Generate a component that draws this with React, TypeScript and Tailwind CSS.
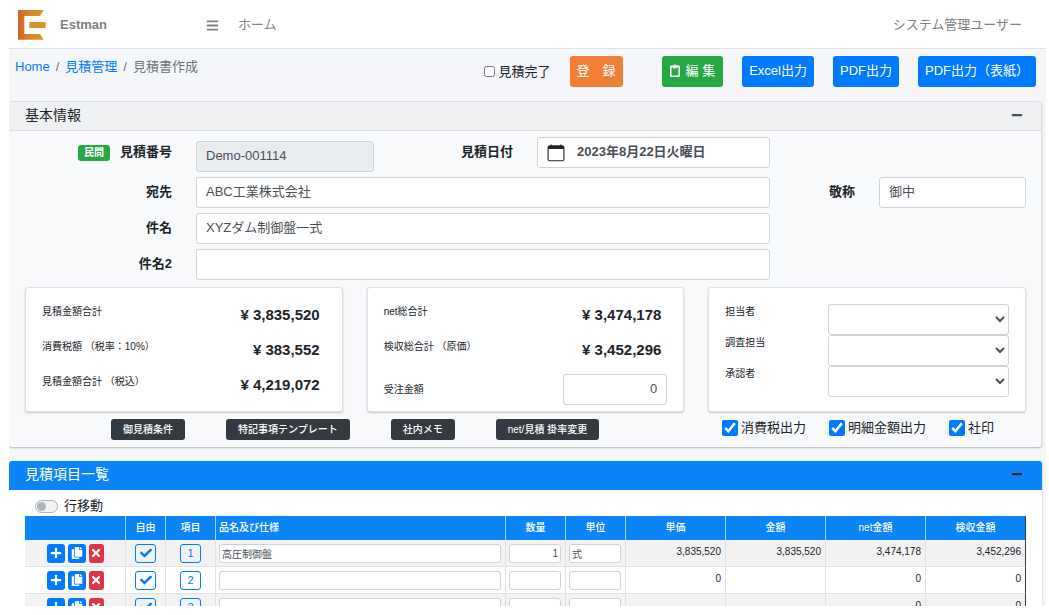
import { useState } from "react";
import type { ReactNode } from "react";
import { FaBars, FaCheck, FaCopy, FaMinus, FaPlus, FaTimes } from "react-icons/fa";

type Row = {
  name: string;
  quantity: string;
  unit: string;
  price: string;
  amount: string;
  net: string;
  cost: string;
};

const emptyRow: Row = { name: "", quantity: "", unit: "", price: "0", amount: "", net: "0", cost: "0" };

const rows: Row[] = [
  {
    name: "高圧制御盤",
    quantity: "1",
    unit: "式",
    price: "3,835,520",
    amount: "3,835,520",
    net: "3,474,178",
    cost: "3,452,296",
  },
  emptyRow,
  { ...emptyRow, price: "" },
];

const fieldClass =
  "block h-[31px] w-full min-w-0 rounded-[3px] border border-[#ced4da] bg-white px-[9px] pb-1 text-[13px] text-[#495057]";
const cellInputClass =
  "block h-[19px] w-full min-w-0 rounded-[3px] border border-[#ced4da] bg-white px-0.5 text-[10px] text-[#495057]";
const labelClass = "text-right text-[13px] leading-5 font-bold text-[#212529]";
const primaryClass = "h-[31px] rounded-[3px] bg-[#007bff] px-[7px] pb-0.5 text-[13px] whitespace-nowrap text-white";
const darkClass = "h-[21px] rounded-[3px] bg-[#343a40] px-3 text-[10px] font-medium whitespace-nowrap text-white";
const panelClass = "rounded-[3px] border border-[#dfe1e4] bg-white px-4 pt-4 shadow-[0_1px_2px_rgba(0,0,0,0.2)]";

function Logo() {
  return (
    <svg viewBox="0 0 84 90" className="h-[30px] w-7" aria-hidden>
      <defs>
        <linearGradient id="logo-fill" x1="0" x2="1" y1="0" y2="0">
          <stop offset="0" stopColor="#cc6228" />
          <stop offset="0.4" stopColor="#d98228" />
          <stop offset="1" stopColor="#dd952b" />
        </linearGradient>
      </defs>
      <path d="M0 0H77L66 18H19V72H66L77 89H0Z" fill="url(#logo-fill)" />
      <path d="M34 36H83V54H34Z" fill="#db922a" />
    </svg>
  );
}

function ClipboardIcon() {
  return (
    <svg viewBox="0 0 10 13" className="h-[13px] w-2.5" aria-hidden>
      <rect x="0.8" y="2.3" width="8.4" height="9.9" rx="0.5" fill="none" stroke="currentColor" strokeWidth="1.6" />
      <path d="M2.6 4.2V1.5H3.8A1.25 1.25 0 0 1 6.2 1.5H7.4V4.2Z" fill="currentColor" />
    </svg>
  );
}

function CalendarIcon() {
  return (
    <svg viewBox="0 0 18 18" className="h-[18px] w-[18px] shrink-0 text-[#212529]" aria-hidden>
      <rect x="1.1" y="2" width="15.8" height="14.8" rx="1.6" fill="none" stroke="currentColor" strokeWidth="1.1" />
      <path d="M1 5V3Q1 1.5 2.6 1.5H3.6V0.5H4.8V1.5H13.2V0.5H14.4V1.5H15.4Q17 1.5 17 3V5Z" fill="currentColor" />
    </svg>
  );
}

function AmountRow({ label, value }: { label: string; value: string }) {
  return (
    <div className="flex h-[35px] items-start justify-between pr-1.5">
      <span className="text-[10px] leading-4">{label}</span>
      <span className="text-[15px] leading-[21px] font-bold">¥ {value}</span>
    </div>
  );
}

function CheckOption({ children }: { children: ReactNode }) {
  return (
    <label className="flex items-center gap-[3px] text-[13px] leading-[18px] whitespace-nowrap">
      <input type="checkbox" defaultChecked className="h-4 w-4 accent-[#007bff]" />
      {children}
    </label>
  );
}

function BasicInfo() {
  const [open, setOpen] = useState(true);

  return (
    <section className="mr-1 rounded-[3px] border-t border-r border-[#dcdee1] bg-[#f8f9fb] shadow-[0_1px_2px_rgba(0,0,0,0.25)]">
      <header className="flex h-[29px] items-center justify-between border-b border-[#dcdee1] bg-[#eff0f2] pr-[18px] pb-0.5 pl-4">
        <h2 className="text-[14px] leading-5">基本情報</h2>
        <button type="button" aria-label="折りたたむ" onClick={() => setOpen(!open)}>
          <FaMinus className="h-3 w-3 text-[#495057]" />
        </button>
      </header>
      {open && (
        <div className="pt-1.5 pr-[15px] pb-[7px] pl-4">
          <div className="grid grid-cols-[147px_minmax(0,574fr)_61px_minmax(0,147fr)] gap-x-6 gap-y-[5px]">
            <div className="flex h-[35px] items-start justify-end gap-2.5 pt-[5px]">
              <span className="mt-[3px] rounded-[3px] bg-[#28a745] px-1.5 text-[10px] leading-4 font-bold text-white">
                民間
              </span>
              <label htmlFor="number" className={labelClass}>
                見積番号
              </label>
            </div>
            <div className="grid grid-cols-[minmax(0,178fr)_115px_minmax(0,233fr)] gap-x-6">
              <div className="self-end">
                <input
                  id="number"
                  readOnly
                  defaultValue="Demo-001114"
                  className="block h-[31px] w-full rounded-[3px] border border-[#ced4da] bg-[#e9ecef] px-[9px] pb-0.5 text-[13px] text-[#495057]"
                />
              </div>
              <label htmlFor="date" className={`${labelClass} pt-[5px]`}>
                見積日付
              </label>
              <div className="flex h-[31px] items-center gap-3 self-start rounded-[3px] border border-[#ced4da] bg-white px-[9px]">
                <CalendarIcon />
                <input
                  id="date"
                  defaultValue="2023年8月22日火曜日"
                  className="w-full min-w-0 pb-0.5 text-[13px] font-bold text-[#495057]"
                />
              </div>
            </div>
            <span />
            <span />

            <label htmlFor="client" className={`${labelClass} pt-[5px]`}>
              宛先
            </label>
            <input id="client" defaultValue="ABC工業株式会社" className={fieldClass} />
            <label htmlFor="honorific" className={`${labelClass} pt-[5px]`}>
              敬称
            </label>
            <input id="honorific" defaultValue="御中" className={fieldClass} />

            <label htmlFor="subject" className={`${labelClass} pt-[5px]`}>
              件名
            </label>
            <input id="subject" defaultValue="XYZダム制御盤一式" className={fieldClass} />
            <span />
            <span />

            <label htmlFor="subject2" className={`${labelClass} pt-[5px]`}>
              件名2
            </label>
            <input id="subject2" className={fieldClass} />
          </div>

          <div className="mt-[7px] grid h-[125px] grid-cols-3 gap-6">
            <div className={panelClass}>
              <AmountRow label="見積金額合計" value="3,835,520" />
              <AmountRow label="消費税額 （税率：10%）" value="383,552" />
              <AmountRow label="見積金額合計 （税込）" value="4,219,072" />
            </div>
            <div className={panelClass}>
              <AmountRow label="net総合計" value="3,474,178" />
              <AmountRow label="検収総合計 （原価）" value="3,452,296" />
              <div className="flex items-center justify-between">
                <label htmlFor="order" className="text-[10px] leading-4">
                  受注金額
                </label>
                <input
                  id="order"
                  defaultValue="0"
                  className="h-[31px] w-[104px] rounded-[3px] border border-[#ced4da] px-[9px] pb-0.5 text-right text-[13px] text-[#495057]"
                />
              </div>
            </div>
            <div className={panelClass}>
              {["担当者", "調査担当", "承認者"].map((name) => (
                <div key={name} className="grid grid-cols-[103fr_181fr] items-start">
                  <label htmlFor={name} className="text-[10px] leading-4">
                    {name}
                  </label>
                  <select
                    id={name}
                    className="h-[31px] w-full rounded-[3px] border border-[#ced4da] bg-white text-[13px] text-[#495057]"
                  >
                    <option value=""></option>
                  </select>
                </div>
              ))}
            </div>
          </div>

          <div className="mt-[7px] flex items-center gap-[41px] pr-8 pl-[86px]">
            <button type="button" className={darkClass}>
              御見積条件
            </button>
            <button type="button" className={darkClass}>
              特記事項テンプレート
            </button>
            <button type="button" className={darkClass}>
              社内メモ
            </button>
            <button type="button" className={darkClass}>
              net/見積 掛率変更
            </button>
            <div className="ml-auto flex gap-[23px] self-start">
              <CheckOption>消費税出力</CheckOption>
              <CheckOption>明細金額出力</CheckOption>
              <CheckOption>社印</CheckOption>
            </div>
          </div>
        </div>
      )}
    </section>
  );
}

function ItemRow({ row, index }: { row: Row; index: number }) {
  const cell = "border-r border-b border-[#dee2e6] px-[3px] last:border-r-[#343a40]";
  const amountCell = `${cell} pr-1 pb-1 text-right`;
  const outline =
    "mx-auto flex h-[19px] w-[21px] items-center justify-center rounded-[3px] border border-[#007bff] text-[11px] text-[#007bff]";

  return (
    <tr className="h-[27px] odd:bg-[#f2f2f2]">
      <td className={cell}>
        <div className="flex justify-center gap-[3px] text-white">
          <button
            type="button"
            aria-label="行を追加"
            className="flex h-[19px] w-[18px] items-center justify-center rounded-[3px] bg-[#007bff]"
          >
            <FaPlus className="h-3 w-3" />
          </button>
          <button
            type="button"
            aria-label="行を複製"
            className="flex h-[19px] w-[18px] items-center justify-center rounded-[3px] bg-[#007bff]"
          >
            <FaCopy className="h-3 w-3" />
          </button>
          <button
            type="button"
            aria-label="行を削除"
            className="flex h-[19px] w-[15px] items-center justify-center rounded-[3px] bg-[#dc3545]"
          >
            <FaTimes className="h-3 w-3" />
          </button>
        </div>
      </td>
      <td className={cell}>
        <button type="button" aria-label="自由" className={outline}>
          <FaCheck className="h-3 w-3" />
        </button>
      </td>
      <td className={cell}>
        <button type="button" className={outline}>
          {index}
        </button>
      </td>
      <td className={`${cell} pr-1`}>
        <input aria-label="品名及び仕様" defaultValue={row.name} className={cellInputClass} />
      </td>
      <td className={`${cell} pr-1`}>
        <input aria-label="数量" defaultValue={row.quantity} className={`${cellInputClass} text-right`} />
      </td>
      <td className={`${cell} pr-1`}>
        <input aria-label="単位" defaultValue={row.unit} className={cellInputClass} />
      </td>
      <td className={amountCell}>{row.price}</td>
      <td className={amountCell}>{row.amount}</td>
      <td className={amountCell}>{row.net}</td>
      <td className={amountCell}>{row.cost}</td>
    </tr>
  );
}

function ItemList() {
  const [open, setOpen] = useState(true);
  const th = "border-r border-[#a9d2fb] px-[3px] pb-0.5 font-medium last:border-r-[#343a40]";

  return (
    <section className="mt-3.5 mr-1 rounded-[3px] bg-white shadow-[0_1px_2px_rgba(0,0,0,0.25)]">
      <header className="flex h-[29px] items-center justify-between rounded-t-[3px] bg-[#0a84f8] pr-[19px] pb-1 pl-4">
        <h2 className="text-[14px] leading-5 text-white">見積項目一覧</h2>
        <button type="button" aria-label="折りたたむ" onClick={() => setOpen(!open)}>
          <FaMinus className="h-3 w-3 text-[#212529]" />
        </button>
      </header>
      {open && (
        <div className="pt-1.5 pr-4 pb-4 pl-4">
          <label className="ml-2.5 flex h-5 w-fit items-center gap-1.5 text-[13px]">
            <input type="checkbox" className="peer sr-only" />
            <span className="flex h-[13px] w-[23px] items-center rounded-full border border-[#adb5bd] bg-[#f1f3f5] px-px">
              <span className="h-[9px] w-[9px] rounded-full bg-[#adb5bd]" />
            </span>
            行移動
          </label>
          <table className="w-full table-fixed border-separate border-spacing-0 text-[10px]">
            <colgroup>
              <col className="w-[101px]" />
              <col className="w-10" />
              <col className="w-[50px]" />
              <col />
              <col className="w-[60px]" />
              <col className="w-[60px]" />
              <col className="w-[100px]" />
              <col className="w-[100px]" />
              <col className="w-[100px]" />
              <col className="w-[100px]" />
            </colgroup>
            <thead>
              <tr className="h-6 bg-[#0a84f8] text-white">
                <th className={th} aria-label="操作"></th>
                <th className={th}>自由</th>
                <th className={th}>項目</th>
                <th className={`${th} text-left`}>品名及び仕様</th>
                <th className={th}>数量</th>
                <th className={th}>単位</th>
                <th className={th}>単価</th>
                <th className={th}>金額</th>
                <th className={th}>net金額</th>
                <th className={th}>検収金額</th>
              </tr>
            </thead>
            <tbody>
              {rows.map((row, i) => (
                <ItemRow key={i} row={row} index={i + 1} />
              ))}
            </tbody>
          </table>
        </div>
      )}
    </section>
  );
}

export default function App() {
  return (
    <div className="h-screen bg-white pr-[3px] pb-[9px] pl-[9px] font-['Liberation_Sans','Noto_Sans_CJK_JP',sans-serif] text-[13px] text-[#212529]">
      <div className="h-full overflow-hidden bg-[#f4f6f9]">
        <header className="flex h-[49px] items-center border-b border-[#dee2e6] bg-white pt-0.5 pr-6 pl-[9px] text-[#808080]">
          <div className="flex w-[188px] items-center gap-3.5">
            <Logo />
            <span className="font-bold">Estman</span>
          </div>
          <button type="button" aria-label="メニュー">
            <FaBars className="h-[13px] w-[13px]" />
          </button>
          <a href="#" className="ml-[19px]">
            ホーム
          </a>
          <span className="ml-auto">システム管理ユーザー</span>
        </header>

        <div className="flex items-start justify-between pt-[7px] pr-2.5 pb-3.5 pl-1.5">
          <nav className="flex gap-1.5 leading-[22px] text-[#6c757d]">
            <a href="#" className="text-[#007bff]">
              Home
            </a>
            <span>/</span>
            <a href="#" className="text-[#007bff]">
              見積管理
            </a>
            <span>/</span>
            <span>見積書作成</span>
          </nav>
          <div className="flex items-center gap-[19px]">
            <label className="flex items-center gap-1">
              <input type="checkbox" className="h-[11px] w-[11px]" />
              見積完了
            </label>
            <button
              type="button"
              className="mr-5 h-[31px] rounded-[3px] bg-[#f08038] px-[7px] pb-0.5 whitespace-nowrap text-white"
            >
              登　録
            </button>
            <button
              type="button"
              className="flex h-[31px] items-center gap-1.5 rounded-[3px] bg-[#28a745] px-2 pb-0.5 whitespace-nowrap text-white"
            >
              <ClipboardIcon />編 集
            </button>
            <button type="button" className={primaryClass}>
              Excel出力
            </button>
            <button type="button" className={primaryClass}>
              PDF出力
            </button>
            <button type="button" className={primaryClass}>
              PDF出力（表紙）
            </button>
          </div>
        </div>

        <BasicInfo />
        <ItemList />
      </div>
    </div>
  );
}
